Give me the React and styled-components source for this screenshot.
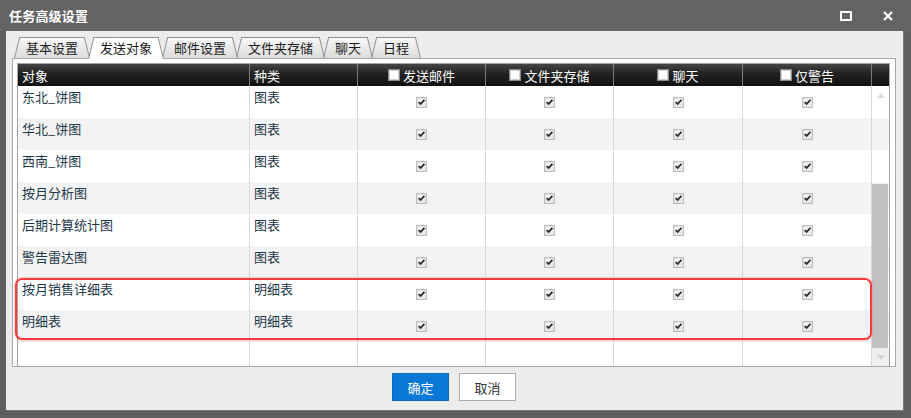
import React from 'react';
import styled, { createGlobalStyle } from 'styled-components';

const FONT = `"Noto Sans CJK SC", "Microsoft YaHei", "Noto Sans", sans-serif`;

const Global = createGlobalStyle`
  html, body { margin: 0; padding: 0; background: #fff; }
  body { font-family: ${FONT}; }
  * { box-sizing: border-box; }
`;

const Window = styled.div`
  width: 911px;
  height: 418px;
  background: #5f5f5f;
  display: flex;
  flex-direction: column;
`;

const TitleBar = styled.div`
  height: 31px;
  flex: none;
  background: #646464;
  display: flex;
  align-items: center;
  justify-content: space-between;
  padding: 0 18px 0 9px;
`;

const Title = styled.div`
  color: #fff;
  font-size: 13px;
  font-weight: bold;
  letter-spacing: 0.2px;
`;

const Controls = styled.div`
  display: flex;
  align-items: center;
  gap: 31px;
`;

const MaxIcon = styled.span`
  display: block;
  width: 12px;
  height: 10px;
  border: 2px solid #fff;
`;

const Content = styled.div`
  flex: 1;
  margin: 0 8px 8px 6px;
  background: #ececec;
  display: flex;
  flex-direction: column;
  padding: 6px 7px 0 6px;
  box-shadow: 1px 1px 0 #7c7c7c;
`;

const TabStrip = styled.div`
  height: 21px;
  flex: none;
  display: flex;
  align-items: flex-end;
  padding-left: 2px;
  position: relative;
  z-index: 2;
`;

const Tab = styled.div`
  position: relative;
  z-index: ${(p) => p.$z};
  height: ${(p) => (p.$active ? 22 : 21)}px;
  margin-bottom: ${(p) => (p.$active ? -1 : 0)}px;
  margin-left: ${(p) => (p.$first ? 0 : -2)}px;
  padding: 0 12px;
  font-size: 13px;
  line-height: 21px;
  color: #1c1c1c;
  white-space: nowrap;

  &::before,
  &::after {
    content: '';
    position: absolute;
    top: 0;
    bottom: 0;
    width: 56%;
    z-index: -1;
    background: ${(p) => (p.$active ? '#ffffff' : 'linear-gradient(#f7f7f7, #dcdcdc)')};
    border-top: 1px solid #8f8f8f;
    transform-origin: bottom;
  }
  &::before {
    left: 0;
    border-left: 1px solid #8f8f8f;
    transform: skewX(-14deg);
  }
  &::after {
    right: 0;
    border-right: 1px solid #8f8f8f;
    transform: skewX(14deg);
  }
`;

const Panel = styled.div`
  flex: 1;
  background: #fff;
  border: 1px solid #a9a9a9;
  padding: 4px 5px 0 4px;
  display: flex;
  flex-direction: column;
  min-height: 0;
`;

const Table = styled.div`
  flex: 1;
  display: flex;
  flex-direction: column;
  border: 1px solid #a4a4a4;
  border-bottom: none;
`;

const COLS = '232px 108px 128px 128px 129px 129px 1fr';

const HeaderRow = styled.div`
  display: grid;
  grid-template-columns: ${COLS};
  height: 22px;
  flex: none;
  background: linear-gradient(#444444, #222222 45%, #121212);
`;

const HeaderCell = styled.div`
  display: flex;
  align-items: center;
  justify-content: ${(p) => (p.$center ? 'center' : 'flex-start')};
  gap: 3px;
  padding-left: ${(p) => (p.$center ? 0 : 4)}px;
  color: #fff;
  font-size: 13px;
  border-right: ${(p) => (p.$last ? 'none' : '1px solid #7d7d7d')};
`;

const HeaderBox = styled.span`
  display: block;
  width: 12px;
  height: 12px;
  background: #fff;
  border: 1px solid #8a8a8a;
  box-shadow: inset 0 0 0 1px #d0d0d0;
`;

const Body = styled.div`
  flex: 1;
  position: relative;
  display: flex;
  flex-direction: column;
`;

const Row = styled.div`
  display: grid;
  grid-template-columns: ${COLS};
  height: ${(p) => (p.$fill ? 'auto' : '32px')};
  flex: ${(p) => (p.$fill ? 1 : 'none')};
  background: ${(p) => (p.$alt ? '#f3f3f3' : '#ffffff')};
`;

const Cell = styled.div`
  border-right: ${(p) => (p.$last ? 'none' : '1px solid #d9d9d9')};
  padding: 2px 0 0 4px;
  font-size: 13px;
  line-height: 18px;
  color: #1d3848;
  white-space: nowrap;
`;

const CheckCell = styled.div`
  border-right: 1px solid #d9d9d9;
  display: flex;
  align-items: center;
  justify-content: center;
`;

const CheckBox = styled.span`
  width: 11px;
  height: 11px;
  border: 1px solid #bdbdbd;
  background: linear-gradient(#f6f6f6, #e2e2e2);
  box-shadow: inset 0 0 0 1px #e4e4e4;
  display: flex;
  align-items: center;
  justify-content: center;
`;

const ScrollBar = styled.div`
  position: absolute;
  top: 0;
  right: 0;
  bottom: 0;
  width: 17px;
  display: flex;
  flex-direction: column;
`;

const ArrowBox = styled.div`
  height: ${(p) => p.$h}px;
  flex: none;
  display: flex;
  align-items: ${(p) => (p.$up ? 'flex-start' : 'center')};
  padding-top: ${(p) => (p.$up ? 7 : 0)}px;
  justify-content: center;
  background: ${(p) => p.$bg};
`;

const Track = styled.div`
  flex: 1;
  display: flex;
  flex-direction: column;
  justify-content: flex-end;
`;

const Thumb = styled.div`
  height: 164px;
  width: 16px;
  background: #c0c0c0;
`;

const Highlight = styled.div`
  position: absolute;
  left: -3px;
  top: 192px;
  width: 857px;
  height: 62px;
  border: 2px solid #ff3a3a;
  border-radius: 7px;
  box-shadow: 0 0 2px rgba(255, 60, 60, 0.55);
  pointer-events: none;
`;

const ButtonRow = styled.div`
  height: 43px;
  flex: none;
  display: flex;
  justify-content: center;
  align-items: flex-start;
  gap: 10px;
  padding-top: 6px;
`;

const Button = styled.button`
  width: 57px;
  height: 28px;
  font-family: ${FONT};
  font-size: 13px;
  padding: 0;
  cursor: pointer;
  border: 1px solid ${(p) => (p.$primary ? '#0a6cc0' : '#adadad')};
  background: ${(p) => (p.$primary ? '#0a78d6' : '#ffffff')};
  color: ${(p) => (p.$primary ? '#ffffff' : '#333333')};
`;

const Check = () => (
  <svg width="7" height="6" viewBox="0 0 7 6">
    <path d="M0.6 3.2 L2.6 5 L6.4 0.8" stroke="#2b2b2b" strokeWidth="1.7" fill="none" />
  </svg>
);

const Tri = ({ down, color }) => (
  <svg width="8" height="5" viewBox="0 0 8 5">
    <path d={down ? 'M0 0 L8 0 L4 5 Z' : 'M0 5 L8 5 L4 0 Z'} fill={color} />
  </svg>
);

const tabs = ['基本设置', '发送对象', '邮件设置', '文件夹存储', '聊天', '日程'];
const rows = [
  ['东北_饼图', '图表'],
  ['华北_饼图', '图表'],
  ['西南_饼图', '图表'],
  ['按月分析图', '图表'],
  ['后期计算统计图', '图表'],
  ['警告雷达图', '图表'],
  ['按月销售详细表', '明细表'],
  ['明细表', '明细表'],
];
const checkCols = ['发送邮件', '文件夹存储', '聊天', '仅警告'];

export default function App() {
  return (
    <>
      <Global />
      <Window>
        <TitleBar>
          <Title>任务高级设置</Title>
          <Controls>
            <MaxIcon />
            <svg width="10" height="10" viewBox="0 0 10 10">
              <path d="M1 1 L9 9 M9 1 L1 9" stroke="#fff" strokeWidth="2.2" />
            </svg>
          </Controls>
        </TitleBar>
        <Content>
          <TabStrip>
            {tabs.map((t, i) => (
              <Tab key={t} $first={i === 0} $active={i === 1} $z={i === 1 ? 20 : 10 - i}>
                {t}
              </Tab>
            ))}
          </TabStrip>
          <Panel>
            <Table>
              <HeaderRow>
                <HeaderCell>对象</HeaderCell>
                <HeaderCell>种类</HeaderCell>
                {checkCols.map((c) => (
                  <HeaderCell key={c} $center>
                    <HeaderBox />
                    {c}
                  </HeaderCell>
                ))}
                <HeaderCell $last />
              </HeaderRow>
              <Body>
                {rows.map(([name, kind], i) => (
                  <Row key={name + i} $alt={i % 2 === 1}>
                    <Cell>{name}</Cell>
                    <Cell>{kind}</Cell>
                    {checkCols.map((c) => (
                      <CheckCell key={c}>
                        <CheckBox>
                          <Check />
                        </CheckBox>
                      </CheckCell>
                    ))}
                    <Cell $last />
                  </Row>
                ))}
                <Row $fill>
                  <Cell />
                  <Cell />
                  <Cell />
                  <Cell />
                  <Cell />
                  <Cell />
                  <Cell $last />
                </Row>
                <ScrollBar>
                  <ArrowBox $h={18} $up $bg="transparent">
                    <Tri color="#dcdcdc" />
                  </ArrowBox>
                  <Track>
                    <Thumb />
                  </Track>
                  <ArrowBox $h={18} $bg="#efefef">
                    <Tri down color="#d4d4d4" />
                  </ArrowBox>
                </ScrollBar>
                <Highlight />
              </Body>
            </Table>
          </Panel>
          <ButtonRow>
            <Button $primary>确定</Button>
            <Button>取消</Button>
          </ButtonRow>
        </Content>
      </Window>
    </>
  );
}
